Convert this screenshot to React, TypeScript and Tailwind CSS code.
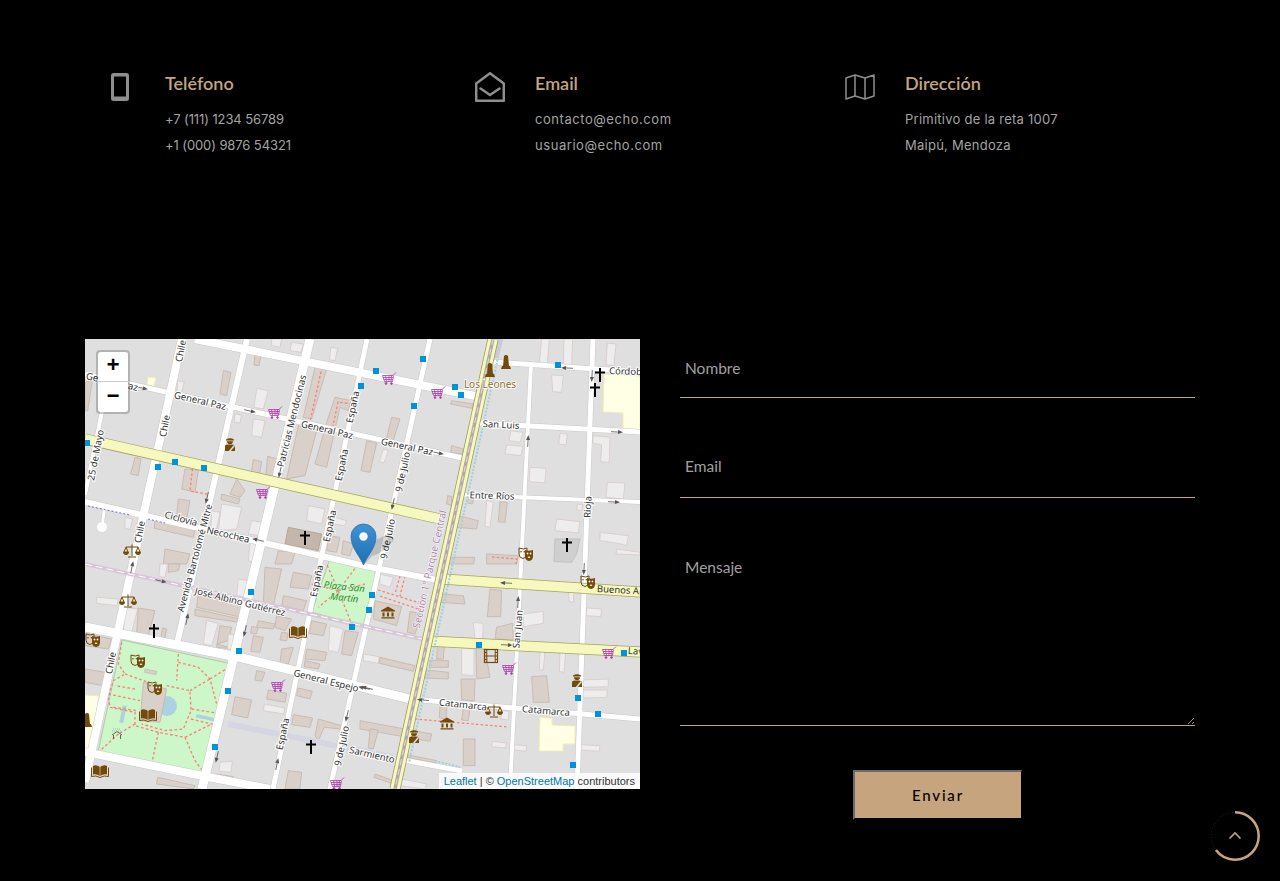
import type { ReactNode } from "react";

const TAN = "#c6a47e";

// ---------- map data (3x crop coordinates, see Crop) ----------
type Poly = [string, "t" | "l" | "c" | "g"];

const blockFill = { t: "#d9d0c9", l: "#eeeded", c: "#c4b6ab", g: "#cfcfcf" };
const blockStroke = { t: "#c4b6ab", l: "#d9c9c9", c: "#b0a090", g: "#bdbdbd" };

const BLOCKS_NW: Poly[] = [
  ["415,95 438,100 425,170 405,165", "t"],
  ["510,45 528,50 522,80 507,78", "t"],
  ["515,148 550,155 535,210 507,205", "l"],
  ["450,225 470,228 465,252 447,250", "l"],
  ["505,240 540,245 530,295 500,290", "l"],
  ["560,0 590,0 585,25 560,20", "l"],
  ["620,10 655,15 648,40 615,35", "l"],
  ["738,25 758,28 750,65 733,62", "l"],
  ["278,125 298,128 290,160 276,158", "l"],
  ["0,130 22,125 8,215 0,215", "t"],
  ["640,260 695,275 660,410 605,420", "t"],
  ["690,85 725,90 680,240 655,235", "t"],
  ["750,175 800,185 790,215 765,205 725,385 690,375 725,250", "t"],
  ["505,362 530,368 520,430 495,425", "t"],
  ["548,352 578,360 560,440 540,435", "t"],
  ["150,355 168,360 160,410 137,405", "t"],
  ["300,390 340,395 330,460 290,450", "t"],
  ["455,420 480,455 465,475 435,465", "t"],
  ["410,465 465,480 460,495 408,482", "t"],
  ["280,480 315,485 305,540 275,530", "t"],
  ["210,545 330,570 325,595 208,568", "t"],
  ["410,495 470,505 455,570 400,575", "l"],
  ["380,515 405,520 395,570 378,565", "l"],
  ["670,500 720,510 710,555 665,545", "l"],
  ["750,535 785,545 780,560 745,555", "l"],
  ["730,590 765,595 755,640 725,635", "t"],
  ["775,605 805,615 795,650 770,645", "t"],
  ["610,565 710,585 700,635 600,615", "c"],
  ["580,635 630,640 620,675 570,675", "t"],
  ["240,630 315,645 305,675 235,675", "t"],
  ["120,535 143,540 135,572 120,568", "l"],
  ["500,545 535,550 525,590 490,585", "l"],
  ["495,610 518,615 505,670 490,665", "l"],
];

const BLOCKS_NE: Poly[] = [
  ["545,0 568,0 562,75 538,72", "l"],
  ["612,0 638,0 635,78 610,75", "l"],
  ["742,12 768,15 762,80 738,78", "l"],
  ["575,108 610,110 605,160 578,158", "l"],
  ["95,235 120,240 95,320 75,315", "t"],
  ["20,305 50,312 30,400 3,395", "t"],
  ["70,330 85,335 72,372 58,368", "l"],
  ["275,185 340,195 335,208 272,195", "t"],
  ["275,320 310,330 305,345 272,340", "t"],
  ["452,275 490,280 480,310 448,305", "l"],
  ["440,318 488,322 483,350 435,345", "l"],
  ["600,283 622,285 618,318 596,315", "l"],
  ["700,290 750,295 748,370 722,368 725,318 698,312", "l"],
  ["510,385 558,388 555,432 508,428", "l"],
  ["742,430 795,432 790,480 738,475", "l"],
  ["380,485 400,490 390,565 375,562", "l"],
  ["420,488 442,490 435,550 415,548", "t"],
  ["263,470 275,472 275,500 260,495", "t"],
  ["325,480 340,482 338,495 323,492", "t"],
  ["295,530 355,545 350,570 285,565", "t"],
  ["590,540 660,548 655,582 585,575", "l"],
  ["652,495 668,497 665,515 650,512", "l"],
  ["720,580 805,590 800,620 770,612 720,605", "l"],
  ["770,630 840,640 840,648 768,645", "l"],
  ["585,600 660,600 650,645 635,670 582,668", "g"],
  ["270,655 345,655 340,675 265,675", "t"],
  ["380,645 475,650 470,675 380,675", "t"],
];

const BLOCKS_SW: Poly[] = [
  ["250,0 285,0 280,20 250,25", "t"],
  ["225,0 248,0 240,40 222,38", "l"],
  ["35,100 100,105 95,125 35,118", "l"],
  ["120,130 158,135 140,205 115,200", "l"],
  ["160,132 210,140 190,215 155,205", "t"],
  ["232,192 245,195 240,222 228,220", "t"],
  ["340,80 480,115 470,160 335,130", "t"],
  ["330,135 465,165 460,175 330,155", "t"],
  ["460,45 490,50 480,100 455,95", "l"],
  ["365,170 400,178 380,245 355,240", "l"],
  ["405,185 440,190 430,230 395,240 450,255 395,250", "t"],
  ["430,210 460,215 455,260 428,255", "l"],
  ["540,10 590,15 565,125 535,120", "t"],
  ["625,25 680,35 670,75 615,70", "t"],
  ["595,95 665,110 655,140 590,125", "t"],
  ["520,170 570,180 565,195 515,190", "t"],
  ["505,215 535,220 525,265 497,262", "t"],
  ["500,188 520,190 515,210 497,208", "t"],
  ["575,155 620,165 600,200 570,190", "t"],
  ["590,205 610,208 605,230 585,228", "t"],
  ["590,255 625,250 610,300 585,298", "t"],
  ["680,170 725,180 715,215 672,208", "t"],
  ["665,255 725,265 720,290 660,285", "t"],
  ["660,290 705,300 700,315 658,308", "t"],
  ["780,200 820,205 800,275 770,270", "t"],
  ["735,185 775,195 760,265 730,260", "l"],
  ["515,320 540,325 530,352 510,348", "t"],
  ["640,372 682,382 675,405 635,395", "t"],
  ["550,378 605,388 600,415 545,405", "t"],
  ["538,420 600,432 596,450 535,440", "l"],
  ["450,398 500,408 488,462 440,452", "t"],
  ["625,452 683,462 675,490 620,482", "t"],
  ["700,465 770,485 765,495 718,490 700,530 690,515", "t"],
  ["405,595 442,592 438,625 402,622", "l"],
  ["395,630 445,638 440,655 395,650", "t"],
  ["610,620 650,625 645,675 600,675", "t"],
  ["218,640 330,665 325,675 215,660", "t"],
  ["0,208 80,225 70,255 0,245", "t"],
  ["0,315 60,325 55,365 0,355", "t"],
];

const BLOCKS_SE: Poly[] = [
  ["60,30 100,40 90,70 60,60", "l"],
  ["45,110 125,128 110,185 40,165", "t"],
  ["150,142 185,150 165,210 142,205", "t"],
  ["340,175 370,178 368,225 345,225", "l"],
  ["410,190 458,178 460,228 405,225", "t"],
  ["390,75 425,80 422,158 382,158", "t"],
  ["245,90 310,95 315,120 240,115", "t"],
  ["490,150 550,142 550,178 490,188", "l"],
  ["680,132 725,135 722,158 678,155", "l"],
  ["625,80 642,80 640,115 628,112", "l"],
  ["305,252 342,255 342,335 305,332", "l"],
  ["348,250 375,255 390,340 350,345", "t"],
  ["232,245 253,248 250,285 230,285", "t"],
  ["210,288 265,290 265,310 208,310", "t"],
  ["198,318 265,325 265,345 195,342", "t"],
  ["10,270 58,278 55,298 10,290", "l"],
  ["60,280 165,305 160,322 58,298", "t"],
  ["540,262 555,262 550,318 538,318", "l"],
  ["600,265 617,265 612,325 598,322", "l"],
  ["515,338 560,335 568,415 520,415", "t"],
  ["668,348 745,345 745,368 668,370", "l"],
  ["668,378 742,378 740,400 668,402", "l"],
  ["303,345 345,345 343,410 305,408", "t"],
  ["240,425 260,428 258,465 238,462", "t"],
  ["310,430 330,432 325,470 305,468", "t"],
  ["425,440 447,442 445,468 423,465", "l"],
  ["0,470 215,510 210,532 0,495", "t"],
  ["30,495 55,498 40,555 25,552", "t"],
  ["310,525 345,525 345,605 310,605", "t"],
  ["397,532 440,537 437,552 395,548", "l"],
  ["462,542 500,545 498,562 460,558", "l"],
  ["662,542 720,545 718,562 660,558", "l"],
  ["45,630 100,650 100,660 42,640", "t"],
  ["125,645 200,660 195,675 120,665", "l"],
  ["130,570 230,590 225,597 130,578", "t"],
];

const WHITE_ROADS: [string, number][] = [
  ["M85,374 L462,458", 5],
  ["M195,339 L475,396", 8],
  ["M85,502 L365,566 L442,581", 6],
  ["M85,627 L238,657 L410,699", 9],
  ["M410,699 L640,719", 5],
  ["M85,752 L208,777 L270,789", 8],
  ["M403,760 L462,771", 5],
  ["M493,362 L640,372", 5],
  ["M478,423 L640,432", 5],
  ["M462,495 L640,502", 4],
  ["M182,339 L85,782", 8],
  ["M110,372 L85,495", 4],
  ["M105,505 L102,527", 3],
  ["M247,339 L177,644", 6],
  ["M310,339 L202,789", 9],
  ["M367,339 L273,789", 5],
  ["M430,339 L330,789", 5],
  ["M531,365 L510,789", 4],
  ["M593,339 L577,789", 5],
];

const BUS_STOPS = [
  [361, 386], [87, 443], [158, 467], [175, 462], [204, 468], [423, 359], [376, 371],
  [455, 387], [461, 395], [414, 406], [558, 365], [251, 592], [352, 627], [239, 651],
  [228, 691], [215, 747], [372, 595], [369, 610], [479, 645], [624, 653], [578, 698],
  [598, 714], [573, 765],
];

const ARROWS = [
  [142, 388, 13], [250, 411, 13], [280, 472, 103], [207, 498, 103], [258, 540, 193],
  [567, 368, 183], [592, 376, 93], [617, 432, 3], [528, 441, -87], [438, 453, 13],
  [393, 504, 103], [614, 502, 3], [161, 581, 13], [132, 567, -78], [187, 619, -78],
  [245, 631, 103], [217, 757, 103], [347, 716, 103], [277, 764, -78], [364, 688, 193],
  [506, 583, 183], [518, 602, -87], [507, 645, 3], [584, 569, 93], [367, 688, 193],
  [423, 700, 185],
];

const LABELS: [string, number, number, number][] = [
  ["General Paz", 112, 382, 13],
  ["General Paz", 200, 401, 13],
  ["General Paz", 327, 430, 13],
  ["General Paz", 407, 447, 12],
  ["Chile", 181, 351, -78],
  ["Chile", 165, 426, -78],
  ["Chile", 140, 532, -78],
  ["Chile", 111, 663, -78],
  ["25 de Mayo", 96, 455, -79],
  ["España", 353, 407, -78],
  ["España", 342, 465, -78],
  ["España", 330, 526, -78],
  ["España", 317, 581, -78],
  ["España", 283, 734, -78],
  ["Patricias Mendocinas", 292, 421, -76],
  ["9 de Julio", 403, 472, -78],
  ["9 de Julio", 388, 539, -78],
  ["9 de Julio", 342, 746, -78],
  ["Avenida Bartolomé Mitre", 195, 558, -75],
  ["Ciclovía", 181, 519, 15],
  ["Necochea", 228, 535, 13],
  ["José Albino Gutiérrez", 240, 602, 14],
  ["General Espejo", 326, 681, 14],
  ["San Luis", 501, 425, 3],
  ["Entre Ríos", 492, 496, 2],
  ["Rioja", 588, 507, -87],
  ["San Juan", 518, 629, -85],
  ["Catamarca", 463, 705, 6],
  ["Catamarca", 546, 711, 5],
  ["Sarmiento", 372, 755, 13],
];

const CARTS = [[275, 413], [263, 493], [389, 379], [438, 393], [278, 686], [337, 784], [609, 653], [509, 669]];
const CROSSES = [[305, 538], [600, 375], [595, 390], [567, 545], [154, 631], [311, 747]];
const SCALES = [[132, 551], [128, 601], [494, 711]];
const POLICE = [[230, 445], [577, 681], [414, 737]];
const MASKS = [[526, 554], [588, 582], [93, 640], [138, 661], [155, 688]];
const BOOKS = [[298, 632], [148, 715], [100, 771]];
const MUSEUMS = [[388, 613], [447, 724]];
const MONUMENTS = [[490, 371], [506, 363], [87, 721]];

// ---------- map pieces ----------
function Crop({ x, y, children }: { x: number; y: number; children: ReactNode }) {
  return <g transform={`translate(${x} ${y}) scale(0.3333)`}>{children}</g>;
}

function Blocks({ list }: { list: Poly[] }) {
  return (
    <>
      {list.map(([points, kind], i) => (
        <polygon key={i} points={points} fill={blockFill[kind]} stroke={blockStroke[kind]} strokeWidth={2.5} />
      ))}
    </>
  );
}

function At({ x, y, children }: { x: number; y: number; children: ReactNode }) {
  return <g transform={`translate(${x} ${y})`}>{children}</g>;
}

function Cart() {
  return (
    <g fill="none" stroke="#ac39ac" strokeWidth={0.8}>
      <path d="M-6.5,-3.5 H4 L7,-6.5 M-6.5,-3.5 L-4.5,2.5 H3.5 L4.5,-3.5 M-6,-1.5 H4.2 M-5.2,0.5 H3.8 M-3.5,-3.5 L-2.5,2.5 M0,-3.5 V2.5 M2.5,-3.5 L2,2.5" />
      <circle cx={-3} cy={4.5} r={0.9} fill="#ac39ac" />
      <circle cx={2.5} cy={4.5} r={0.9} fill="#ac39ac" />
    </g>
  );
}

function Cross() {
  return <path d="M-1,-7 H1 V-3.6 H5 V-1.6 H1 V7 H-1 V-1.6 H-5 V-3.6 H-1 Z" fill="#000" />;
}

function Scale() {
  return (
    <g fill="none" stroke="#734a08" strokeWidth={1}>
      <path d="M0,-6.5 V5 M-4,6 H4 M-6,-4 H6 M-6,-4 L-8,1 M-6,-4 L-4,1 M6,-4 L4,1 M6,-4 L8,1" />
      <path d="M-8.5,1 H-3.5 A2.5,2.5 0 0 1 -8.5,1 Z M3.5,1 H8.5 A2.5,2.5 0 0 1 3.5,1 Z" fill="#734a08" />
    </g>
  );
}

function Police() {
  return (
    <g fill="#734a08">
      <path d="M-4,-5.5 Q0,-8 4,-5.5 V-4.6 H-4 Z" />
      <path d="M-3,-3.8 H3 Q3,-1 0,-1 Q-3,-1 -3,-3.8 Z" />
      <path d="M-5,6 V1.5 Q-5,-0.4 -2,-0.4 H2 Q5,-0.4 5,1.5 V6 Z" />
      <path d="M-1.2,6 L4,-0.2 L5,0.9 L0.8,6 Z" fill="#e0dfdf" />
    </g>
  );
}

function Mask() {
  return (
    <g>
      <path d="M-7,-6 Q-2.5,-4 1,-6 V0 Q1,4 -3,4.5 Q-7,4 -7,0 Z" fill="none" stroke="#734a08" strokeWidth={1} />
      <circle cx={-5} cy={-2.2} r={0.8} fill="#734a08" />
      <circle cx={-1.6} cy={-2.2} r={0.8} fill="#734a08" />
      <path d="M-1,-4 Q3,-2.5 7,-4 V2 Q7,6.5 3,7 Q-1,6.5 -1,2 Z" fill="#734a08" />
      <circle cx={1.5} cy={-0.5} r={0.9} fill="#fff" />
      <circle cx={4.5} cy={-0.5} r={0.9} fill="#fff" />
      <path d="M1.5,3 Q3,2 4.5,3 Q3,5 1.5,3 Z" fill="#fff" />
    </g>
  );
}

function Book() {
  return (
    <g>
      <path d="M0,-4 Q-4,-7 -7,-5 V3.6 Q-4,2.4 0,5 Q4,2.4 7,3.6 V-5 Q4,-7 0,-4 Z" fill="#734a08" />
      <path d="M0,-4 V5" stroke="#e8dcc6" strokeWidth={0.6} />
      <path d="M-8.5,-3.5 V5.5 Q-4,4 0,6.5 Q4,4 8.5,5.5 V-3.5" fill="none" stroke="#734a08" strokeWidth={1} />
    </g>
  );
}

function Museum() {
  return (
    <path
      d="M0,-6.5 L7,-2.5 V-1.5 H-7 V-2.5 Z M-5.5,-0.5 H-3.5 V3.5 H-5.5 Z M-1,-0.5 H1 V3.5 H-1 Z M3.5,-0.5 H5.5 V3.5 H3.5 Z M-6.5,4.3 H6.5 V5.5 H-6.5 Z"
      fill="#734a08"
    />
  );
}

function Film() {
  return (
    <g fill="none" stroke="#734a08">
      <rect x={-6.5} y={-6.5} width={13} height={13} strokeWidth={1.2} />
      <path d="M-4.2,-6.5 V6.5 M4.2,-6.5 V6.5 M-4.2,0 H4.2" strokeWidth={1} />
      <path d="M-6.5,-3.5 H-4.2 M-6.5,0 H-4.2 M-6.5,3.5 H-4.2 M4.2,-3.5 H6.5 M4.2,0 H6.5 M4.2,3.5 H6.5" strokeWidth={1} />
    </g>
  );
}

function Monument() {
  return <path d="M-2,-7 Q0,-9 2,-7 L3,3 H-3 Z M-4,3 H4 L5,6 H-5 Z" fill="#734a08" />;
}

function Arrow({ a }: { a: number }) {
  return (
    <g transform={`rotate(${a})`} fill="#555" stroke="#555">
      <path d="M-6,0 H3" strokeWidth={0.8} fill="none" />
      <path d="M1,-2 L6,0 L1,2 Z" strokeWidth={0} />
    </g>
  );
}

function StreetMap() {
  return (
    <svg viewBox="85 339 555 450" className="block w-full h-full font-['Noto_Sans']">
      <rect x={85} y={339} width={555} height={450} fill="#e0dfdf" />

      {/* land use */}
      <polygon points="604,374 640,376 640,430 623,429 623,413 603,412" fill="#ffffe5" stroke="#f1edb0" />
      <polygon points="540,717 552,718 552,725 575,726 575,744 563,744 563,751 539,751" fill="#ffffe5" stroke="#f1edb0" />
      <polygon points="148,377 156,378 154,386 147,385" fill="#ffffe5" stroke="#f1edb0" />
      <polygon points="85,695 99,696 90,752 85,751" fill="#ffffe5" stroke="#f1edb0" />
      <polygon points="122,640 232,664 207,776 98,752" fill="#cdf7c9" stroke="#a9cfa2" />
      <polygon points="330,558 377,570 363,627 312,612" fill="#cdf7c9" stroke="#a9cfa2" />
      <circle cx={167} cy={706} r={10} fill="#aad3df" />

      <Crop x={85} y={339}><Blocks list={BLOCKS_NW} /></Crop>
      <Crop x={360} y={339}><Blocks list={BLOCKS_NE} /></Crop>
      <Crop x={85} y={564}><Blocks list={BLOCKS_SW} /></Crop>
      <Crop x={360} y={564}><Blocks list={BLOCKS_SE} /></Crop>

      <Crop x={85} y={564}>
        <polygon points="175,355 245,375 225,475 165,470" fill="#d9d0c9" stroke="#c4b6ab" strokeWidth={2.5} />
        <polygon points="335,450 388,462 385,472 332,460" fill="#aad3df" />
        <polygon points="113,425 125,425 115,478 103,475" fill="#aad3df" />
        <polygon points="180,315 215,322 213,332 178,325" fill="#d9d0c9" stroke="#c4b6ab" strokeWidth={2} />
        <g fill="none" stroke="#fa8072" strokeWidth={4} strokeDasharray="8 7">
          <path d="M110,235 L100,300 L120,330 L85,350 L70,400 L75,430 L150,445 L150,485 L220,505 L300,520 L330,590 L365,637" />
          <path d="M120,330 L190,355 M150,375 L90,365 M70,390 L165,410 M85,430 L155,440" />
          <path d="M280,270 L275,350 M280,295 L340,310 L375,345 L395,420 L405,455 M375,345 L440,305 M315,380 L375,345" />
          <path d="M245,365 L315,380 L318,440 L295,495 L240,500 L170,480 M320,435 L410,450 M318,465 L400,485" />
          <path d="M220,505 L200,600 M300,520 L380,480 M100,510 L40,565 M150,480 L100,510" />
          <path d="M760,80 L725,0 M760,80 L820,0 M760,80 L840,60 M760,80 L800,180 M760,80 L700,130 M760,80 L680,60" />
        </g>
      </Crop>
      <g fill="none" stroke="#fa8072" strokeWidth={1.3} strokeDasharray="2.5 2.2">
        <path d="M322,367 L310,422 M352,404 L338,402 L333,426" />
        <path d="M193,464 L190,491 L207,494" />
        <path d="M415,719 L508,727" />
        <path d="M492,557 L517,559 L516,564" />
        <path d="M378,590 L423,604 M380,596 L421,610 M400,576 L395,594 M405,576 L400,596" />
      </g>

      {/* streets */}
      <path d="M228,724 L393,757" stroke="#d6d6e2" strokeWidth={6} fill="none" />
      {WHITE_ROADS.map(([d, w], i) => (
        <path key={i} d={d} stroke="#c9c7c7" strokeWidth={w + 1} fill="none" />
      ))}
      {WHITE_ROADS.map(([d, w], i) => (
        <path key={i} d={d} stroke="#fff" strokeWidth={w} fill="none" />
      ))}
      <circle cx={102} cy={527} r={5} fill="#fff" />
      <path d="M88,506 L130,515 M148,519 L165,523" stroke="#4a4af0" strokeWidth={0.8} strokeDasharray="2 2" fill="none" />
      <path d="M85,564 L422,639" stroke="#d7c6d7" strokeWidth={4} fill="none" />
      <path d="M85,564 L422,639" stroke="#fff" strokeWidth={1} strokeDasharray="7 4" fill="none" />
      <path d="M435,761 L460,767" stroke="#9fd0e0" strokeWidth={2} strokeDasharray="2 1.5" fill="none" />

      {/* yellow avenues */}
      {["M85,439 L440,519", "M442,579 L640,592", "M428,641 L640,652"].map(d => (
        <g key={d}>
          <path d={d} stroke="#a3a35c" strokeWidth={11} fill="none" />
          <path d={d} stroke="#f6f9be" strokeWidth={9.5} fill="none" />
        </g>
      ))}
      <path d="M502,339 L409,763" stroke="#9fd0e0" strokeWidth={2} strokeDasharray="2 1.5" fill="none" />
      <path d="M503,339 L498,358 H490 L495,339 Z" fill="#c9c9d9" />
      <path d="M493,339 L395,789" stroke="#9a9a50" strokeWidth={11} fill="none" />
      <path d="M493,339 L395,789" stroke="#f6f9be" strokeWidth={9.5} fill="none" />
      <path d="M493,339 L395,789" stroke="#b4a9a6" strokeWidth={3.5} fill="none" />
      <path d="M493,339 L395,789" stroke="#e6e0c8" strokeWidth={1} strokeDasharray="6 4" fill="none" />

      {/* oneway arrows */}
      {ARROWS.map(([x, y, a], i) => (
        <At key={i} x={x} y={y}><Arrow a={a} /></At>
      ))}

      {/* stops */}
      {BUS_STOPS.map(([x, y], i) => (
        <rect key={i} x={x - 3} y={y - 3} width={6} height={6} fill="#0092da" />
      ))}

      {/* pois */}
      {CARTS.map(([x, y], i) => <At key={i} x={x} y={y}><Cart /></At>)}
      {CROSSES.map(([x, y], i) => <At key={i} x={x} y={y}><Cross /></At>)}
      {SCALES.map(([x, y], i) => <At key={i} x={x} y={y}><Scale /></At>)}
      {POLICE.map(([x, y], i) => <At key={i} x={x} y={y}><Police /></At>)}
      {MASKS.map(([x, y], i) => <At key={i} x={x} y={y}><Mask /></At>)}
      {BOOKS.map(([x, y], i) => <At key={i} x={x} y={y}><Book /></At>)}
      {MUSEUMS.map(([x, y], i) => <At key={i} x={x} y={y}><Museum /></At>)}
      {MONUMENTS.map(([x, y], i) => <At key={i} x={x} y={y}><Monument /></At>)}
      <At x={491} y={656}><Film /></At>
      <At x={117} y={735}>
        <path d="M-5,0 L0,-3.5 L5,0 M-3.5,0 V4 M3.5,0 V4" fill="none" stroke="#555" strokeWidth={0.9} />
        <path d="M-5,-4 H5 M-4,-6 H4" stroke="#7fb0a0" strokeWidth={0.8} strokeDasharray="1 1" />
      </At>

      {/* labels */}
      <g fontSize={9.5} fill="#333" stroke="#fff" strokeWidth={2} paintOrder="stroke" textAnchor="middle">
        {LABELS.map(([t, x, y, r], i) => (
          <text key={i} transform={`translate(${x} ${y}) rotate(${r})`} dy={3}>{t}</text>
        ))}
        <text transform="translate(609 371) rotate(2)" dy={3} textAnchor="start">Córdoba</text>
        <text transform="translate(597 589) rotate(3)" dy={3} textAnchor="start" strokeWidth={0}>Buenos Aires</text>
        <text transform="translate(628 651) rotate(3)" dy={3} textAnchor="start" strokeWidth={0}>Lavalle</text>
      </g>
      <text x={490} y={388} fontSize={10} fill="#8f6a2f" stroke="#fff" strokeWidth={1.5} paintOrder="stroke" textAnchor="middle">Los Leones</text>
      <g fontSize={9.5} fontStyle="italic" fill="#2b8a2b" stroke="#cdf7c9" strokeWidth={1} paintOrder="stroke" textAnchor="middle">
        <text transform="translate(344 590) rotate(6)">Plaza San</text>
        <text transform="translate(344 601) rotate(6)">Martín</text>
      </g>
      <text
        transform="translate(433 570) rotate(-77)"
        fontSize={10}
        fill="#a983a9"
        stroke="#fff"
        strokeWidth={1}
        paintOrder="stroke"
        textAnchor="middle"
      >
        Sección 1° Parque Central
      </text>

      {/* marker */}
      <defs>
        <linearGradient id="pin" x1="0" y1="0" x2="0" y2="1">
          <stop offset="0" stopColor="#3f93d6" />
          <stop offset="1" stopColor="#1f6fb2" />
        </linearGradient>
      </defs>
      <path d="M364,565 L372,556 Q386,552 394,540 Q394,534 384,536 Q372,540 366,552 Z" fill="#000" opacity={0.15} />
      <path
        d="M363.5,565 C360,556 351,548 351,536.5 A12.5,12.5 0 0 1 376,536.5 C376,548 367,556 363.5,565 Z"
        fill="url(#pin)"
        stroke="#2a6ea8"
        strokeWidth={0.8}
      />
      <circle cx={363.5} cy={536.5} r={4.2} fill="#fff" />
    </svg>
  );
}

// ---------- page ----------
function PhoneIcon() {
  return (
    <svg viewBox="0 0 18 28" className="w-[18px] h-7" fill="#8e8e8e">
      <path
        fillRule="evenodd"
        d="M2.5 0 H15.5 A2.5 2.5 0 0 1 18 2.5 V25.5 A2.5 2.5 0 0 1 15.5 28 H2.5 A2.5 2.5 0 0 1 0 25.5 V2.5 A2.5 2.5 0 0 1 2.5 0 Z M3 3.5 V23.5 H15 V3.5 Z"
      />
    </svg>
  );
}

function MailIcon() {
  return (
    <svg viewBox="0 0 30 30" className="w-[30px] h-[30px]" fill="none" stroke="#8e8e8e" strokeWidth={2.5} strokeLinejoin="round">
      <path d="M1.2 11.5 L15 1.2 L28.8 11.5 V28.8 H1.2 Z" />
      <path d="M5.5 16.5 L15 23 L24.5 16.5" strokeLinecap="round" />
    </svg>
  );
}

function MapIcon() {
  return (
    <svg viewBox="0 0 30 26" className="w-[30px] h-[26px]" fill="none" stroke="#8e8e8e" strokeWidth={1.5} strokeLinejoin="round">
      <path d="M1 4 L10 1 L20 4 L29 1 V22 L20 25 L10 22 L1 25 Z" />
      <path d="M10 1 V22 M20 4 V25" />
    </svg>
  );
}

function InfoBlock({
  icon,
  title,
  lines,
  spacing,
}: {
  icon: ReactNode;
  title: string;
  lines: string[];
  spacing: string;
}) {
  return (
    <div className="flex w-[370px]">
      <div className="w-[70px] h-[30px] flex items-center justify-center">{icon}</div>
      <div className="pl-[10px]">
        <h3 className="font-['Lato'] font-semibold text-[18px] leading-[22px] text-[#c6a47e]">{title}</h3>
        <div className="mt-[12px]">
          {lines.map(l => (
            <p key={l} className={`text-[13px] leading-[26px] text-[#a3a3a3] ${spacing}`}>{l}</p>
          ))}
        </div>
      </div>
    </div>
  );
}

const fieldClass =
  "w-full bg-transparent border-b border-[#c6a47e] px-[5px] outline-none text-[15.5px] font-['Lato'] placeholder:text-[#a0a0a0] block";

export default function App() {
  return (
    <div className="min-h-[881px] bg-black font-['Inter',sans-serif] px-[85px] pt-[72px] relative overflow-hidden">
      <section className="flex">
        <InfoBlock
          icon={<PhoneIcon />}
          title="Teléfono"
          lines={["+7 (111) 1234 56789", "+1 (000) 9876 54321"]}
          spacing="tracking-[-0.1px]"
        />
        <InfoBlock
          icon={<MailIcon />}
          title="Email"
          lines={["contacto@echo.com", "usuario@echo.com"]}
          spacing="tracking-[0.55px]"
        />
        <InfoBlock
          icon={<MapIcon />}
          title="Dirección"
          lines={["Primitivo de la reta 1007", "Maipú, Mendoza"]}
          spacing="tracking-[0.25px]"
        />
      </section>

      <section className="flex gap-10 mt-[181px]">
        <div className="relative w-[555px] h-[450px] overflow-hidden shrink-0">
          <StreetMap />
          <div className="absolute left-[11px] top-[11px] w-[34px] border-2 border-black/20 rounded bg-clip-padding">
            <div className="h-[30px] bg-white rounded-t-sm border-b border-[#ccc] flex items-center justify-center font-['Liberation_Mono'] font-bold text-[22px] text-black">
              +
            </div>
            <div className="h-[30px] bg-white rounded-b-sm flex items-center justify-center font-['Liberation_Mono'] font-bold text-[22px] text-black">
              −
            </div>
          </div>
          <div className="absolute right-0 bottom-0 bg-white/80 px-[5px] font-['Liberation_Sans'] text-[11px] leading-4 text-[#333]">
            <span className="text-[#0078a8]">Leaflet</span> | © <span className="text-[#0078a8]">OpenStreetMap</span> contributors
          </div>
        </div>

        <form className="w-[515px]">
          <input placeholder="Nombre" className={`${fieldClass} h-[59px]`} />
          <input placeholder="Email" className={`${fieldClass} h-[60px] mt-10 pb-1`} />
          <textarea placeholder="Mensaje" className={`${fieldClass} h-[188px] mt-10 pt-[18px]`} />
          <div className="flex justify-center mt-[44px]">
            <button
              type="button"
              className="w-[169px] h-[50px] bg-[#c6a47e] border-2 border-r border-t-[#6b6b6b] border-l-[#6b6b6b] border-r-black border-b-black font-['Lato'] font-medium text-[15px] tracking-[1.8px] text-black"
            >
              Enviar
            </button>
          </div>
        </form>
      </section>

      <button type="button" className="absolute right-[20px] bottom-[20px] w-[50px] h-[50px]">
        <svg viewBox="0 0 50 50" className="w-full h-full" fill="none">
          <circle cx={25} cy={25} r={23.7} stroke="#222" strokeWidth={1} strokeDasharray="1 2" />
          <circle
            cx={25}
            cy={25}
            r={23.7}
            stroke={TAN}
            strokeWidth={2.5}
            strokeDasharray="96 149"
            transform="rotate(-90 25 25)"
          />
          <path d="M19.5 27.5 L25 22 L30.5 27.5" stroke={TAN} strokeWidth={1.6} />
        </svg>
      </button>
    </div>
  );
}
